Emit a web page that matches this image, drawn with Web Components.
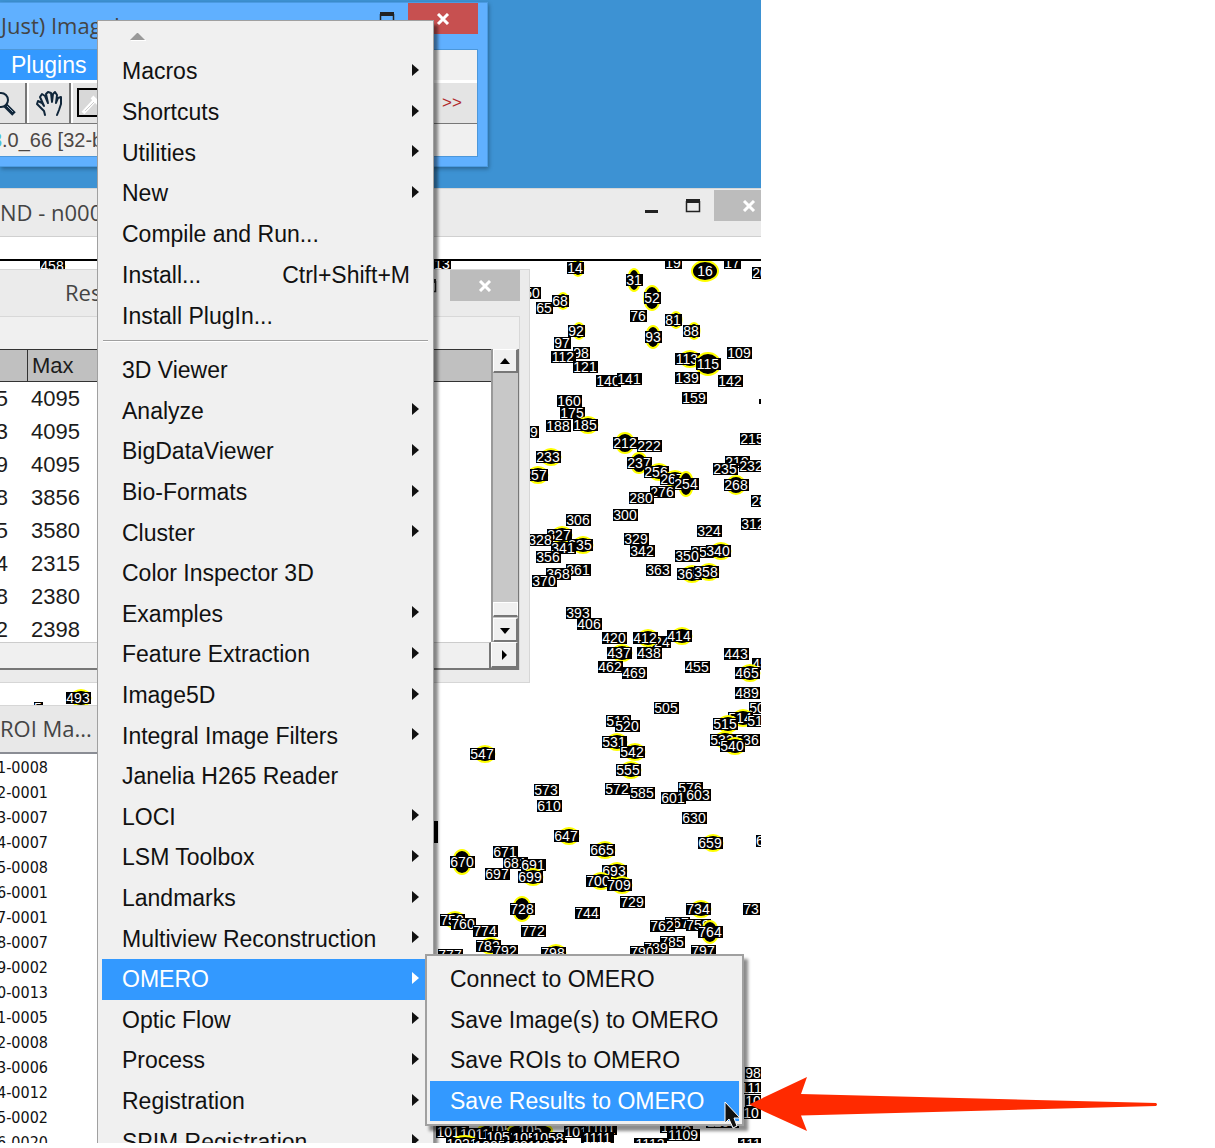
<!DOCTYPE html>
<html lang="en">
<head>
<meta charset="utf-8">
<title>Save Results to OMERO</title>
<style>
  body { margin: 0; background: #fff; font-family: "Liberation Sans", Arial, sans-serif; }
</style>
</head>
<body>
<omero-guide></omero-guide>

<script>
class Base extends HTMLElement {
  constructor() { super(); this.attachShadow({ mode: "open" }); }
  connectedCallback() { this.shadowRoot.innerHTML = this.render(); }
}

/* Window frame: title, minimise / maximise / close, slotted body */
customElements.define("app-window", class extends Base {
  render() {
    return `<style>
      :host { display: flex; flex-direction: column; box-sizing: border-box; overflow: hidden;
        background: var(--frame, #ebebeb); border: 1px solid var(--edge, #d6d6d6); border-left: 0; }
      header { display: flex; flex: none; height: 46px; padding-right: 9px; align-items: flex-start; }
      h2 { flex: 1; margin: 0; padding-left: var(--title-x, 0); font: 400 22px/44px "Open Sans", "Noto Sans", sans-serif;
        color: #444; white-space: nowrap; overflow: hidden; }
      button { flex: none; box-sizing: border-box; width: 42px; height: 31px; padding: 0; border: 0; background: none; display: grid; place-items: center; }
      .close { width: 70px; background: var(--close, #bcbcbc); }
    </style>
    <header><h2>${this.getAttribute("label")}</h2>
      ${this.hasAttribute("plain") ? "" : `
      <button aria-label="Minimize"><svg width="16" height="16"><path d="M2 12h13v3H2z" fill="#222"/></svg></button>
      <button aria-label="Maximize"><svg width="16" height="14"><path d="M1.5 2v10.500h13V2" fill="none" stroke="#222" stroke-width="1.500"/><path d="M1 0h14v4H1z" fill="#222"/></svg></button>
      <button class="close" aria-label="Close"><svg width="14" height="12"><path d="M2 1l10 10M12 1L2 11" stroke="#fff" stroke-width="3"/></svg></button>`}
    </header><slot></slot>`;
  }
});

/* Main toolbar window content */
customElements.define("tool-panel", class extends Base {
  render() {
    return `<style>
      :host { display: block; margin-right: 9px; border: 1px solid #4c97da; border-left: 0; background: #f0f0f0; height: 106px; }
      nav { height: 30px; display: flex; border-bottom: 3px solid #fff; }
      nav button { width: 110px; border: 0; padding: 0 0 0 11px; text-align: left; background: #3399ff; color: #fff; font: 23px/30px "Liberation Sans", Arial, sans-serif; }
      .tools { display: flex; height: 40px; background: #e4e4e4; border-bottom: 1px solid #777; }
      .tools button { box-sizing: border-box; width: 44px; padding: 0; border: 0; border-right: 2px solid #777; border-left: 2px solid #fff; background: #e4e4e4; display: grid; place-items: center; }
      .tools button:first-child { width: 27px; border-left: 0; }
      .tools .more { width: 50px; margin-left: auto; border: 0; color: #b02a2a; font: 17px "Liberation Sans", Arial, sans-serif; }
      p { margin: 0; font-size: 20px; line-height: 32px; color: #4c4744; white-space: nowrap; display: flex; }
      p span { width: 2px; overflow: hidden; display: flex; justify-content: flex-end; color: #4bbfd8; }
    </style>
    <nav><button>Plugins</button></nav>
    <div class="tools">
      <button aria-label="Magnifying glass"><svg width="25" height="40" fill="none" stroke="#10263a"><circle cx="1" cy="17" r="7" stroke-width="2"/><path d="M5 22l9 9" stroke-width="5"/><path d="M7 23l6 6" stroke="#9ab" stroke-width="1"/></svg></button>
      <button aria-label="Scrolling tool"><svg width="30" height="30" fill="none" stroke="#10263a" stroke-width="2" stroke-linejoin="round" stroke-linecap="round"><path d="M11 27L10 23L3 16L4 13L8 15L10 18L6 9L8 6L11 8L14 15L12 6L14 4L17 5L18 14L19 6L21 4L23 7L22 15L24 10L27 9L27 16L25 22L23 27"/></svg></button>
      <button aria-label="Color picker"><svg width="38" height="32"><rect x="4" y="2" width="34" height="27" fill="#d8d8d8" stroke="#000" stroke-width="2"/><path d="M9 26L21 13M18 10L25 17" stroke="#fff" stroke-width="4"/><path d="M11 24L20 15" stroke="#ccc" stroke-width="1"/></svg></button>
      <button class="more" aria-label="More tools">&gt;&gt;</button>
    </div>
    <p><span>3</span>.0_66 [32-bit]</p>`;
  }
});

/* Measurements table with its scroll bars */
customElements.define("results-table", class extends Base {
  render() {
    const rows = [["5","4095"],["3","4095"],["9","4095"],["8","3856"],["5","3580"],["4","2315"],["8","2380"],["2","2398"]];
    const arrow = d => `<svg width="12" height="12"><path d="${d}"/></svg>`;
    return `<style>
      :host { display: block; margin-right: 9px; background: #f0f0f0; border-top: 1px solid #d8d8d8; border-right: 1px solid #d8d8d8; }
      .frame { margin-top: 32px; display: grid; grid-template-columns: 1fr 27px; grid-template-rows: 293px 26px; border-bottom: 2px solid #777; border-right: 1px solid #777; }
      .pane { overflow: hidden; background: #fff; }
      table { border-collapse: separate; border-spacing: 0; width: 100%; table-layout: fixed; font-size: 22px; color: #1c1c1c; }
      col:first-child { width: 28px; }
      th { box-sizing: border-box; height: 33px; padding: 0 0 0 4px; text-align: left; font-weight: 400; background: #c0c0c0; border-top: 1px solid #333; border-bottom: 1px solid #333; }
      th:first-child { border-right: 1px solid #333; padding: 0; }
      td { height: 33px; padding: 0 0 0 3px; line-height: 33px; }
      td:first-child { padding: 0; }
      td div { width: 8px; display: flex; justify-content: flex-end; overflow: hidden; }
      .v { display: flex; flex-direction: column; background: #c8c8c8; border-left: 2px solid #999; }
      button { box-sizing: border-box; height: 24px; padding: 0; display: grid; place-items: center; background: #f0f0f0; border: 1px solid #fff; border-right: 2px solid #777; border-bottom: 2px solid #777; }
      .thumb { margin-top: auto; height: 12px; background: #f0f0f0; border: 1px solid #fff; border-bottom: 2px solid #777; margin-bottom: 1px; }
      .h { background: #f0f0f0; border-top: 1px solid #ccc; border-right: 2px solid #777; }
      .r { height: 26px; }
    </style>
    <div class="frame">
      <div class="pane"><table><colgroup><col><col></colgroup><thead><tr><th></th><th>Max</th></tr></thead>
      <tbody>${rows.map(r => `<tr><td><div>${r[0]}</div></td><td>${r[1]}</td></tr>`).join("")}</tbody></table></div>
      <div class="v"><button aria-label="Scroll up">${arrow("M1 9h10L6 3z")}</button><div class="thumb"></div><button aria-label="Scroll down">${arrow("M1 4h10L6 10z")}</button></div>
      <div class="h"></div><button class="r" aria-label="Scroll right">${arrow("M4 1v10l5-5z")}</button>
    </div>`;
  }
});

/* Region list */
customElements.define("roi-list", class extends Base {
  render() {
    const names = "1-0008 2-0001 3-0007 4-0007 5-0008 6-0001 7-0001 8-0007 9-0002 0-0013 1-0005 2-0008 3-0006 4-0012 5-0002 6-0020".split(" ");
    return `<style>
      :host { display: block; flex: 1; background: #fff; border-top: 2px solid #8a8d94; }
      ul { list-style: none; margin: 0; padding: 1px 0 0; width: 48px; font: 16px/25px "DejaVu Sans Condensed", "DejaVu Sans", sans-serif; color: #111; overflow: hidden; }
      li { display: flex; justify-content: flex-end; white-space: nowrap; }
    </style><ul>${names.map(n => `<li>${n}</li>`).join("")}</ul>`;
  }
});

/* Numbered particles: number x y; "y" = selected outline, "b" = large particle */
const PARTICLES = `13 442 264,14 575 268 y,31 634 280 b 6 11,19 673 263,16 705 271 b 13 10,17 732 263,20 760 273,
50 532 293,65 544 308,68 560 301 y,52 652 298 b 8 12,76 638 316,81 673 320 y,88 691 331 y,92 576 331 y,93 653 337 b 7 11,
97 562 343,98 581 353,112 563 357,121 585 367,140 608 381,141 629 379,113 687 359 y,115 708 364 b 12 11,109 739 353,
139 687 378,142 730 381,159 694 398,160 569 401,175 572 413,188 558 426,185 585 425 y,179 526 432,
222 649 446,212 625 443 b 9 10,233 548 457 y,237 639 463 b 8 10,215 752 439,219 737 462,235 725 469,232 751 466,
257 535 475 y,256 656 472 y,267 672 479 y,254 686 484 b 7 12,276 662 492,280 641 498,268 736 485 b 9 9,28 759 501,
300 625 515,306 578 520,324 709 531,312 753 524,327 559 535 y,328 540 540,335 580 545 y,341 563 548,356 548 557,
329 636 539,342 642 551,353 703 552,350 687 556,340 718 551 y,363 658 570,365 689 574 y,358 706 572 y,361 578 570,368 558 574,370 544 581,
393 578 613,406 589 624,420 614 638,424 658 642,412 645 638 y,414 679 636 y,437 619 653 y,438 649 653,462 610 667,
469 634 673,455 697 667,443 736 654,45 760 664,465 747 673 y,489 747 693,505 666 708,519 618 721,520 627 726,
531 614 742 y,542 632 752 y,555 628 770 y,547 482 754 y,573 546 790,610 549 806,572 617 789,585 642 793,576 690 788,601 673 798,
603 698 795,630 694 818,50 757 708,514 740 718 y,515 725 724 y,517 759 721,533 722 740 y,536 747 740,540 732 746 y,
647 566 836 y,670 462 862 b 9 12,671 505 852,681 515 863,691 533 865,697 497 874,699 530 877 y,665 602 850 y,659 710 843 y,
6 760 841,693 614 871 y,700 598 881 y,709 619 885 y,729 632 902,728 522 909 b 9 12,744 587 913,734 698 909 y,73 751 909,
750 452 920 y,760 463 924,774 485 931,772 533 931,767 677 923,762 662 926,759 698 925,764 710 932 b 8 11,
785 672 942,789 656 948,790 642 952,797 703 951,782 488 946 y,792 505 951,798 553 953 y,777 450 955,
98 753 1073,1110 755 1088,106 757 1101,107 755 1113,105 500 1130 b 22 7,105 530 1130 b 22 7,1010 452 1132,1011 475 1134,
1051 502 1137,1053 528 1138,1058 548 1138,1010 580 1132,1101 600 1129,1111 597 1138,1108 676 1127,1107 722 1122,1109 683 1135,1115 754 1144,1112 650 1144,
1021 462 1144 y,1025 490 1146,1031 520 1146,1041 550 1146,493 78 698 y,458 52 266 y,5 38 708`;

customElements.define("particle-map", class extends Base {
  render() {
    const marks = PARTICLES.split(",").map(s => {
      const [n, x, y, k, rx, ry] = s.trim().split(" ");
      const w = n.length * 8 + 1;
      let out = "";
      if (k === "y") out += `<ellipse cx="${+x + 3}" cy="${y}" rx="${w / 2 - 3}" ry="8" fill="#000" stroke="#ff0" stroke-width="2"/>`;
      if (k === "b") out += `<ellipse cx="${x}" cy="${y}" rx="${rx}" ry="${ry}" fill="#000" stroke="#ff0" stroke-width="2"/>`;
      return out + `<rect x="${x - Math.floor(w / 2)}" y="${y - 6}" width="${w}" height="12"/><text x="${x}" y="${+y + 5}">${n}</text>`;
    }).join("");
    return `<style>
      :host { display: block; height: 100%; background: #fff; }
      svg { display: block; font: 14px "Liberation Sans", Arial, sans-serif; }
      text { fill: #fff; text-anchor: middle; }
    </style>
    <svg width="100%" height="100%"><g>${marks}<path d="M434 821h4v22h-4z"/><path d="M759 399h2v5h-2z"/></g><path d="M0 237h800v22H0z" fill="#fff"/><path d="M0 236h800v1H0z" fill="#d0d0d0"/><path d="M0 259h800v2H0z"/></svg>`;
  }
});

/* Menu entry */
customElements.define("menu-item", class extends Base {
  render() {
    const on = this.hasAttribute("active");
    return `<style>
      :host { display: grid; min-height: 0; }
      button { min-height: 0; display: flex; align-items: center; padding: 0 15px 0 20px; border: 0; text-align: left; white-space: nowrap;
        font: 23px/30px "Liberation Sans", Arial, sans-serif; color: ${on ? "#fff" : "#111"}; background: ${on ? "#3399ff" : "none"}; }
      kbd { margin: 0 4px 0 auto; font: inherit; }
      svg { flex: none; margin: 0 -5px 3px auto; fill: currentColor; }
    </style>
    <button role="menuitem"><slot></slot>${this.hasAttribute("keys") ? `<kbd>${this.getAttribute("keys")}</kbd>` : ""}
    ${this.hasAttribute("more") ? `<svg width="7" height="12"><path d="M0 0L7 6L0 12z"/></svg>` : ""}</button>`;
  }
});

customElements.define("popup-menu", class extends Base {
  render() {
    return `<style>
      :host { display: block; box-sizing: border-box; background: #f0f0f0; border: 1px solid #a0a0a0; padding: 4px; box-shadow: 4px 5px 3px rgba(0,0,0,.45); }
    </style><div role="menu"><slot></slot></div>`;
  }
});

customElements.define("omero-guide", class extends Base {
  render() {
    const items = list => list.split("|").map(t => {
      const more = t.endsWith(">"), name = t.replace(">", "");
      return `<menu-item ${more ? "more" : ""} ${name === "OMERO" ? "active" : ""} ${name === "Install..." ? 'keys="Ctrl+Shift+M"' : ""}>${name}</menu-item>`;
    }).join("");
    return `<style>
      :host { display: block; }
      .stage { position: relative; min-height: 1143px; padding-bottom: 5px; }
      .desktop { position: relative; max-width: 761px; height: 1143px; overflow: hidden; background: #3d92d3; }
      app-window, popup-menu, .arrow, .cursor { position: absolute; }
      .fiji { left: 0; top: 2px; width: 488px; height: 165px; --frame: #60b0ff; --edge: #4b9be2; --close: #c75050; --title-x: 1px; box-shadow: 1px 2px 4px rgba(0,0,0,.3); }
      .image { left: 0; top: 188px; width: 794px; height: 1000px; padding-top: 1px; }
      .canvas { position: absolute; inset: 236px 0 0; overflow: hidden; }
      .canvas > particle-map { position: absolute; inset: -236px 0 0; height: auto; }
      .results { left: 0; top: 269px; width: 530px; height: 414px; --title-x: 65px; }
      .roi { left: 0; top: 705px; width: 200px; height: 460px; --frame: #e8e8e8; }
      .main { left: 97px; top: 20px; width: 337px; height: 1160px; padding-top: 0; }
      .sub { left: 425px; top: 954px; width: 319px; border-width: 2px; padding: 3px; }
      .up { display: block; margin: 12px 0 10px 26px; }
      .a, .b, .c { display: grid; grid-auto-rows: 1fr; }
      .a { height: 285px; } .b { height: 812px; } .c { height: 162px; }
      hr { margin: 4px 1px 8px; border: 0; height: 1px; background: #a0a0a0; border-bottom: 1px solid #fff; }
      .arrow { left: 748px; top: 1076px; }
      .cursor { left: 724px; top: 1101px; }
    </style>
    <main class="stage">
      <div class="desktop">
        <app-window class="fiji" label="Just) ImageJ"><tool-panel></tool-panel></app-window>
        <app-window class="image" label="ND - n0000"></app-window>
        <div class="canvas"><particle-map></particle-map></div>
        <app-window class="results" label="Results"><results-table></results-table></app-window>
        <app-window class="roi" plain label="ROI Ma..."><roi-list></roi-list></app-window>
        <popup-menu class="main">
          <svg class="up" width="18" height="8"><path d="M3 7h15v1H3z" fill="#fff"/><path d="M2 7h15L10 0H9z" fill="#999"/></svg>
          <div class="a">${items("Macros>|Shortcuts>|Utilities>|New>|Compile and Run...|Install...|Install PlugIn...")}</div>
          <hr>
          <div class="b">${items("3D Viewer|Analyze>|BigDataViewer>|Bio-Formats>|Cluster>|Color Inspector 3D|Examples>|Feature Extraction>|Image5D>|Integral Image Filters>|Janelia H265 Reader|LOCI>|LSM Toolbox>|Landmarks>|Multiview Reconstruction>|OMERO>|Optic Flow>|Process>|Registration>|SPIM Registration>")}</div>
        </popup-menu>
        <popup-menu class="sub"><div class="c">
          <menu-item>Connect to OMERO</menu-item><menu-item>Save Image(s) to OMERO</menu-item>
          <menu-item>Save ROIs to OMERO</menu-item><menu-item active>Save Results to OMERO</menu-item>
        </div></popup-menu>
      </div>
      <svg class="arrow" width="412" height="58"><path d="M1 28.500L59 1L53 18L408 27Q410 28.500 408 30L53 39.500L59 55z" fill="#ff2a00"/></svg>
      <svg class="cursor" width="18" height="30"><path d="M1 1V22L5 18L9 27L13 25L10 17H16z" fill="#111" stroke="#fff" stroke-width="1"/></svg>
    </main>`;
  }
});
</script>
</body>
</html>
